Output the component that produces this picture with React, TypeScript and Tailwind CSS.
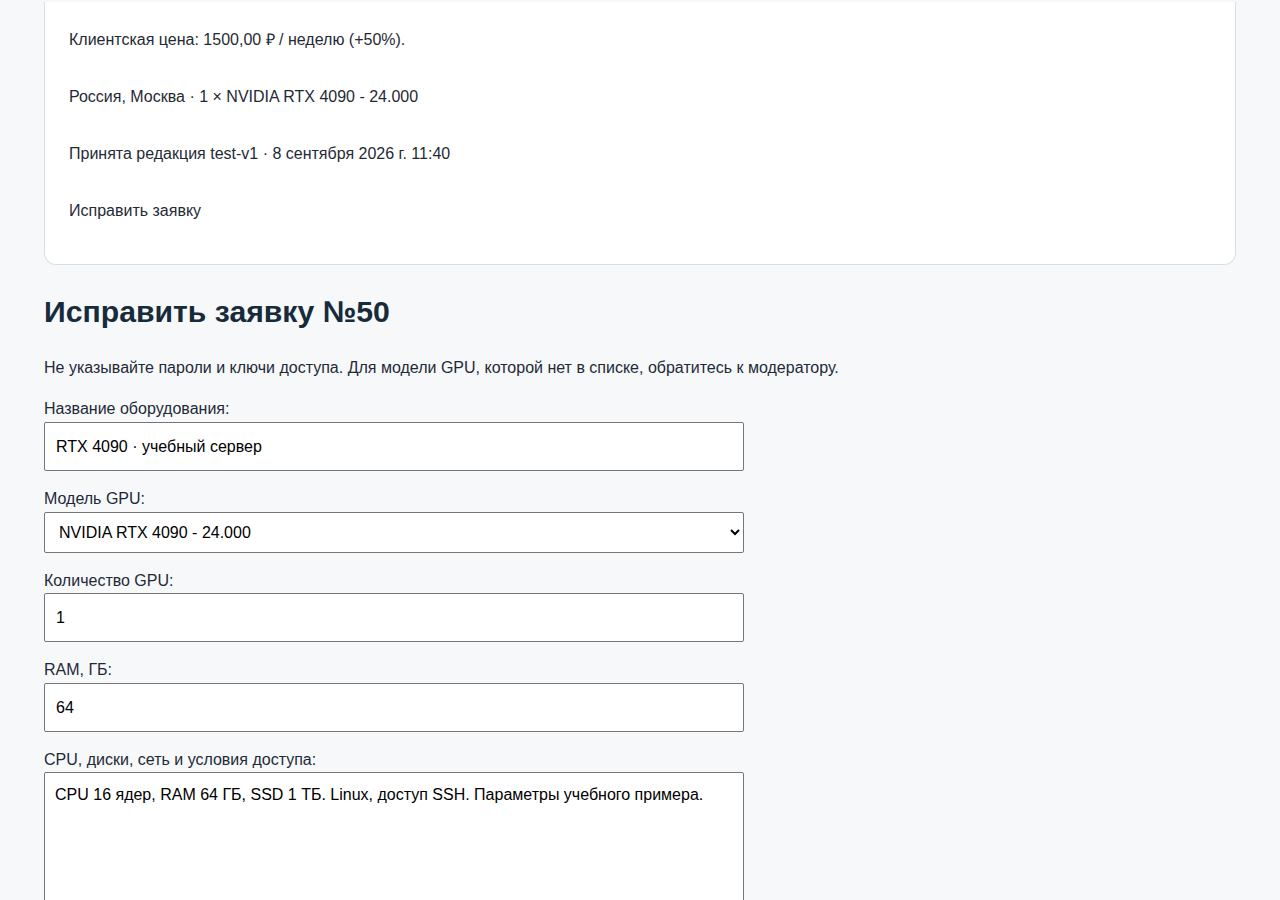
import { useState } from "react";

const summary = [
  "Клиентская цена: 1500,00 ₽ / неделю (+50%).",
  "Россия, Москва · 1 × NVIDIA RTX 4090 - 24.000",
  "Принята редакция test-v1 · 8 сентября 2026 г. 11:40",
  "Исправить заявку",
];

const fieldClass =
  "block w-[700px] border border-[#767676] rounded-[2px] bg-white text-base text-black focus:outline-none";

export default function App() {
  const [name, setName] = useState("RTX 4090 · учебный сервер");
  const [gpu, setGpu] = useState("rtx4090");
  const [count, setCount] = useState("1");
  const [ram, setRam] = useState("64");
  const [details, setDetails] = useState(
    "CPU 16 ядер, RAM 64 ГБ, SSD 1 ТБ. Linux, доступ SSH. Параметры учебного примера."
  );

  return (
    <div className="min-h-screen bg-[#f6f8fa] font-['Liberation_Sans',Arial,sans-serif] text-base text-[#1f2a37]">
      <div className="px-11 pt-[2px] pb-16">
        <div className="rounded-b-xl border border-t-0 border-[#d5dee7] bg-white px-6 pt-[26px] pb-[41px]">
          <div className="flex flex-col gap-[33px] leading-6">
            {summary.map((line) => (
              <p key={line}>{line}</p>
            ))}
          </div>
        </div>

        <h1 className="mt-[29px] text-[30.2px] font-bold leading-9 text-[#172b3a]">
          Исправить заявку №50
        </h1>
        <p className="mt-[26px] leading-6">
          Не указывайте пароли и ключи доступа. Для модели GPU, которой нет в списке, обратитесь к модератору.
        </p>

        <form className="mt-[17px]" onSubmit={(e) => e.preventDefault()}>
          <label htmlFor="name" className="block leading-6">
            Название оборудования:
          </label>
          <input
            id="name"
            type="text"
            value={name}
            onChange={(e) => setName(e.target.value)}
            className={`${fieldClass} mt-px h-[49px] px-[11px]`}
          />

          <label htmlFor="gpu" className="mt-4 block leading-6">
            Модель GPU:
          </label>
          <select
            id="gpu"
            value={gpu}
            onChange={(e) => setGpu(e.target.value)}
            className={`${fieldClass} mt-px h-[41px] px-[10px]`}
          >
            <option value="rtx4090">NVIDIA RTX 4090 - 24.000</option>
            <option value="rtx3090">NVIDIA RTX 3090 - 24.000</option>
            <option value="a100">NVIDIA A100 - 80.000</option>
          </select>

          <label htmlFor="count" className="mt-4 block leading-6">
            Количество GPU:
          </label>
          <input
            id="count"
            type="text"
            value={count}
            onChange={(e) => setCount(e.target.value)}
            className={`${fieldClass} h-[49px] px-[11px]`}
          />

          <label htmlFor="ram" className="mt-4 block leading-6">
            RAM, ГБ:
          </label>
          <input
            id="ram"
            type="text"
            value={ram}
            onChange={(e) => setRam(e.target.value)}
            className={`${fieldClass} mt-px h-[49px] px-[11px]`}
          />

          <label htmlFor="details" className="mt-4 block leading-6">
            CPU, диски, сеть и условия доступа:
          </label>
          <textarea
            id="details"
            value={details}
            onChange={(e) => setDetails(e.target.value)}
            className={`${fieldClass} h-[200px] resize-y px-[10px] py-[10px] leading-6`}
          />
        </form>
      </div>
    </div>
  );
}
